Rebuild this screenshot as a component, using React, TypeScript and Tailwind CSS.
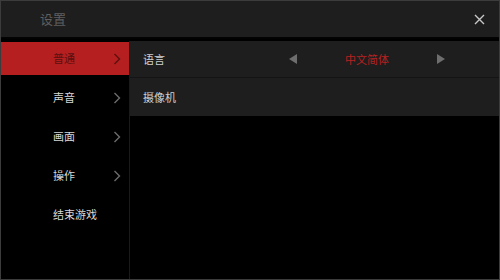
import React from "react";

const menu = ["普通", "声音", "画面", "操作", "结束游戏"];

const Chevron = ({ active }: { active: boolean }) => (
  <svg
    width="8"
    height="12"
    viewBox="0 0 8 12"
    fill="none"
    stroke={active ? "#5e1010" : "#6b6b6b"}
    strokeWidth="1.4"
    className="absolute right-[8px]"
  >
    <path d="M1.5 1 L6.5 6 L1.5 11" />
  </svg>
);

export default function App() {
  return (
    <div
      className="flex h-[280px] w-[500px] flex-col overflow-hidden border border-[#3c3c3c] bg-black text-[11px]"
      style={{ fontFamily: '"Noto Sans CJK SC", "Noto Sans", sans-serif' }}
    >
      {/* header */}
      <div className="flex h-[36px] shrink-0 items-center justify-between bg-[#1e1e1e] pl-[39px] pr-[14px]">
        <span className="text-[13px] text-[#5f5f5f]">设置</span>
        <svg width="11" height="11" viewBox="0 0 11 11" stroke="#c8c8c8" strokeWidth="1.4">
          <path d="M1 1 L10 10 M10 1 L1 10" />
        </svg>
      </div>
      <div className="h-[4px] shrink-0 bg-gradient-to-b from-[#050505] to-black" />

      <div className="flex flex-1">
        {/* sidebar */}
        <div className="flex w-[128px] shrink-0 flex-col gap-[6px] pt-[1px]">
          {menu.map((item, i) => (
            <div
              key={item}
              className={
                i === 0
                  ? "relative flex h-[33px] items-center bg-[#b51f1f] pl-[52px] text-[#5a1010]"
                  : "relative flex h-[33px] items-center pl-[52px] text-[#d8d8d8]"
              }
            >
              {item}
              {i < 4 && <Chevron active={i === 0} />}
            </div>
          ))}
        </div>
        <div className="w-px shrink-0 bg-[#3a0c0c]" />

        {/* content */}
        <div className="flex flex-1 flex-col">
          <div className="flex h-[37px] items-center border-b border-[#141414] bg-[#1e1e1e] pl-[13px]">
            <span className="w-[140px] text-[#d0d0d0]">语言</span>
            <svg width="8" height="10" viewBox="0 0 8 10" className="ml-[6px]">
              <path d="M8 0 L0 5 L8 10 Z" fill="#6e6e6e" />
            </svg>
            <span className="w-[140px] text-center text-[#b52222]">中文简体</span>
            <svg width="8" height="10" viewBox="0 0 8 10">
              <path d="M0 0 L8 5 L0 10 Z" fill="#6e6e6e" />
            </svg>
          </div>
          <div className="flex h-[38px] items-center bg-[#1e1e1e] pl-[13px] text-[#d0d0d0]">
            摄像机
          </div>
        </div>
      </div>
    </div>
  );
}
